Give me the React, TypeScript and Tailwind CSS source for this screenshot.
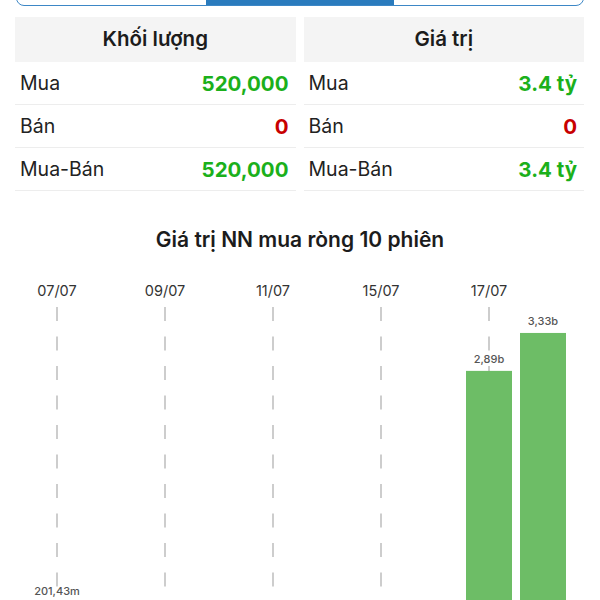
import React from 'react';

const rowsLeft = [
  { label: 'Mua', value: '520,000', tone: 'up' },
  { label: 'Bán', value: '0', tone: 'down' },
  { label: 'Mua-Bán', value: '520,000', tone: 'up' },
];

const rowsRight = [
  { label: 'Mua', value: '3.4 tỷ', tone: 'up' },
  { label: 'Bán', value: '0', tone: 'down' },
  { label: 'Mua-Bán', value: '3.4 tỷ', tone: 'up' },
];

// 10 phiên, value in billions
const sessions = [
  { date: '07/07', value: 0.20143, label: '201,43m' },
  { date: '08/07', value: 0 },
  { date: '09/07', value: 0 },
  { date: '10/07', value: 0 },
  { date: '11/07', value: 0 },
  { date: '14/07', value: 0 },
  { date: '15/07', value: 0 },
  { date: '16/07', value: 0 },
  { date: '17/07', value: 2.89, label: '2,89b' },
  { date: '18/07', value: 3.33, label: '3,33b' },
];

function StatTable({
  title,
  rows,
}: {
  title: string;
  rows: { label: string; value: string; tone: string }[];
}) {
  return (
    <div className="flex flex-col">
      <div className="h-[45px] bg-[#f4f4f4] flex items-center justify-center text-[20.5px] font-semibold text-[#1c1c1c]">
        {title}
      </div>
      {rows.map((r) => (
        <div
          key={r.label}
          className="h-[43px] pt-[2px] border-b border-[#ededed] flex items-center justify-between pl-[5px] pr-[7px]"
        >
          <span className="text-[19.5px] text-[#222]">{r.label}</span>
          <span
            className={
              r.tone === 'up'
                ? 'text-[20.5px] font-bold text-[#1bb01b]'
                : 'text-[20.5px] font-bold text-[#c80000]'
            }
          >
            {r.value}
          </span>
        </div>
      ))}
    </div>
  );
}

function NetBuyChart() {
  const baseY = 350;
  const scale = 86.2;
  const colX = (i: number) => 57 + 54 * i;

  return (
    <svg width={600} height={350} className="block">
      {sessions.map((s, i) =>
        i % 2 === 0 ? (
          <g key={'g' + s.date}>
            <text
              x={colX(i)}
              y={26}
              textAnchor="middle"
              fontSize={14.5}
              fill="#333"
              fontFamily="Inter, sans-serif"
            >
              {s.date}
            </text>
            <line
              x1={colX(i)}
              x2={colX(i)}
              y1={37}
              y2={350}
              stroke="#bdbdbd"
              strokeWidth={1.5}
              strokeDasharray="14 15.5"
            />
          </g>
        ) : null
      )}
      {sessions.map((s, i) => {
        if (!s.value) return null;
        const h = s.value * scale;
        const top = baseY - h;
        return (
          <g key={'b' + s.date}>
            <rect x={colX(i) - 23} y={top} width={46} height={h} fill="#6dbd66" />
            <text
              x={colX(i)}
              y={top - 8}
              textAnchor="middle"
              fontSize={11}
              fontWeight={500}
              fill="#555"
              fontFamily="Inter, sans-serif"
            >
              {s.label}
            </text>
          </g>
        );
      })}
    </svg>
  );
}

export default function App() {
  return (
    <div className="w-[600px] h-[600px] overflow-hidden bg-white font-['Inter',sans-serif]">
      {/* segmented control, scrolled mostly out of view */}
      <div className="mx-[16px] -mt-[30px] h-[36px] border-[1.5px] border-[#3d87c6] rounded-[8px] grid grid-cols-3 overflow-hidden">
        <div />
        <div className="bg-[#2a7bbd]" />
        <div />
      </div>

      <div className="mt-[11px] pl-[15px] pr-[16px] grid grid-cols-2 gap-x-[8px]">
        <StatTable title="Khối lượng" rows={rowsLeft} />
        <StatTable title="Giá trị" rows={rowsRight} />
      </div>

      <div className="mt-[36px] text-center text-[21px] leading-[26px] font-semibold text-[#1c1c1c]">
        Giá trị NN mua ròng 10 phiên
      </div>

      <div className="mt-[17px]">
        <NetBuyChart />
      </div>
    </div>
  );
}
